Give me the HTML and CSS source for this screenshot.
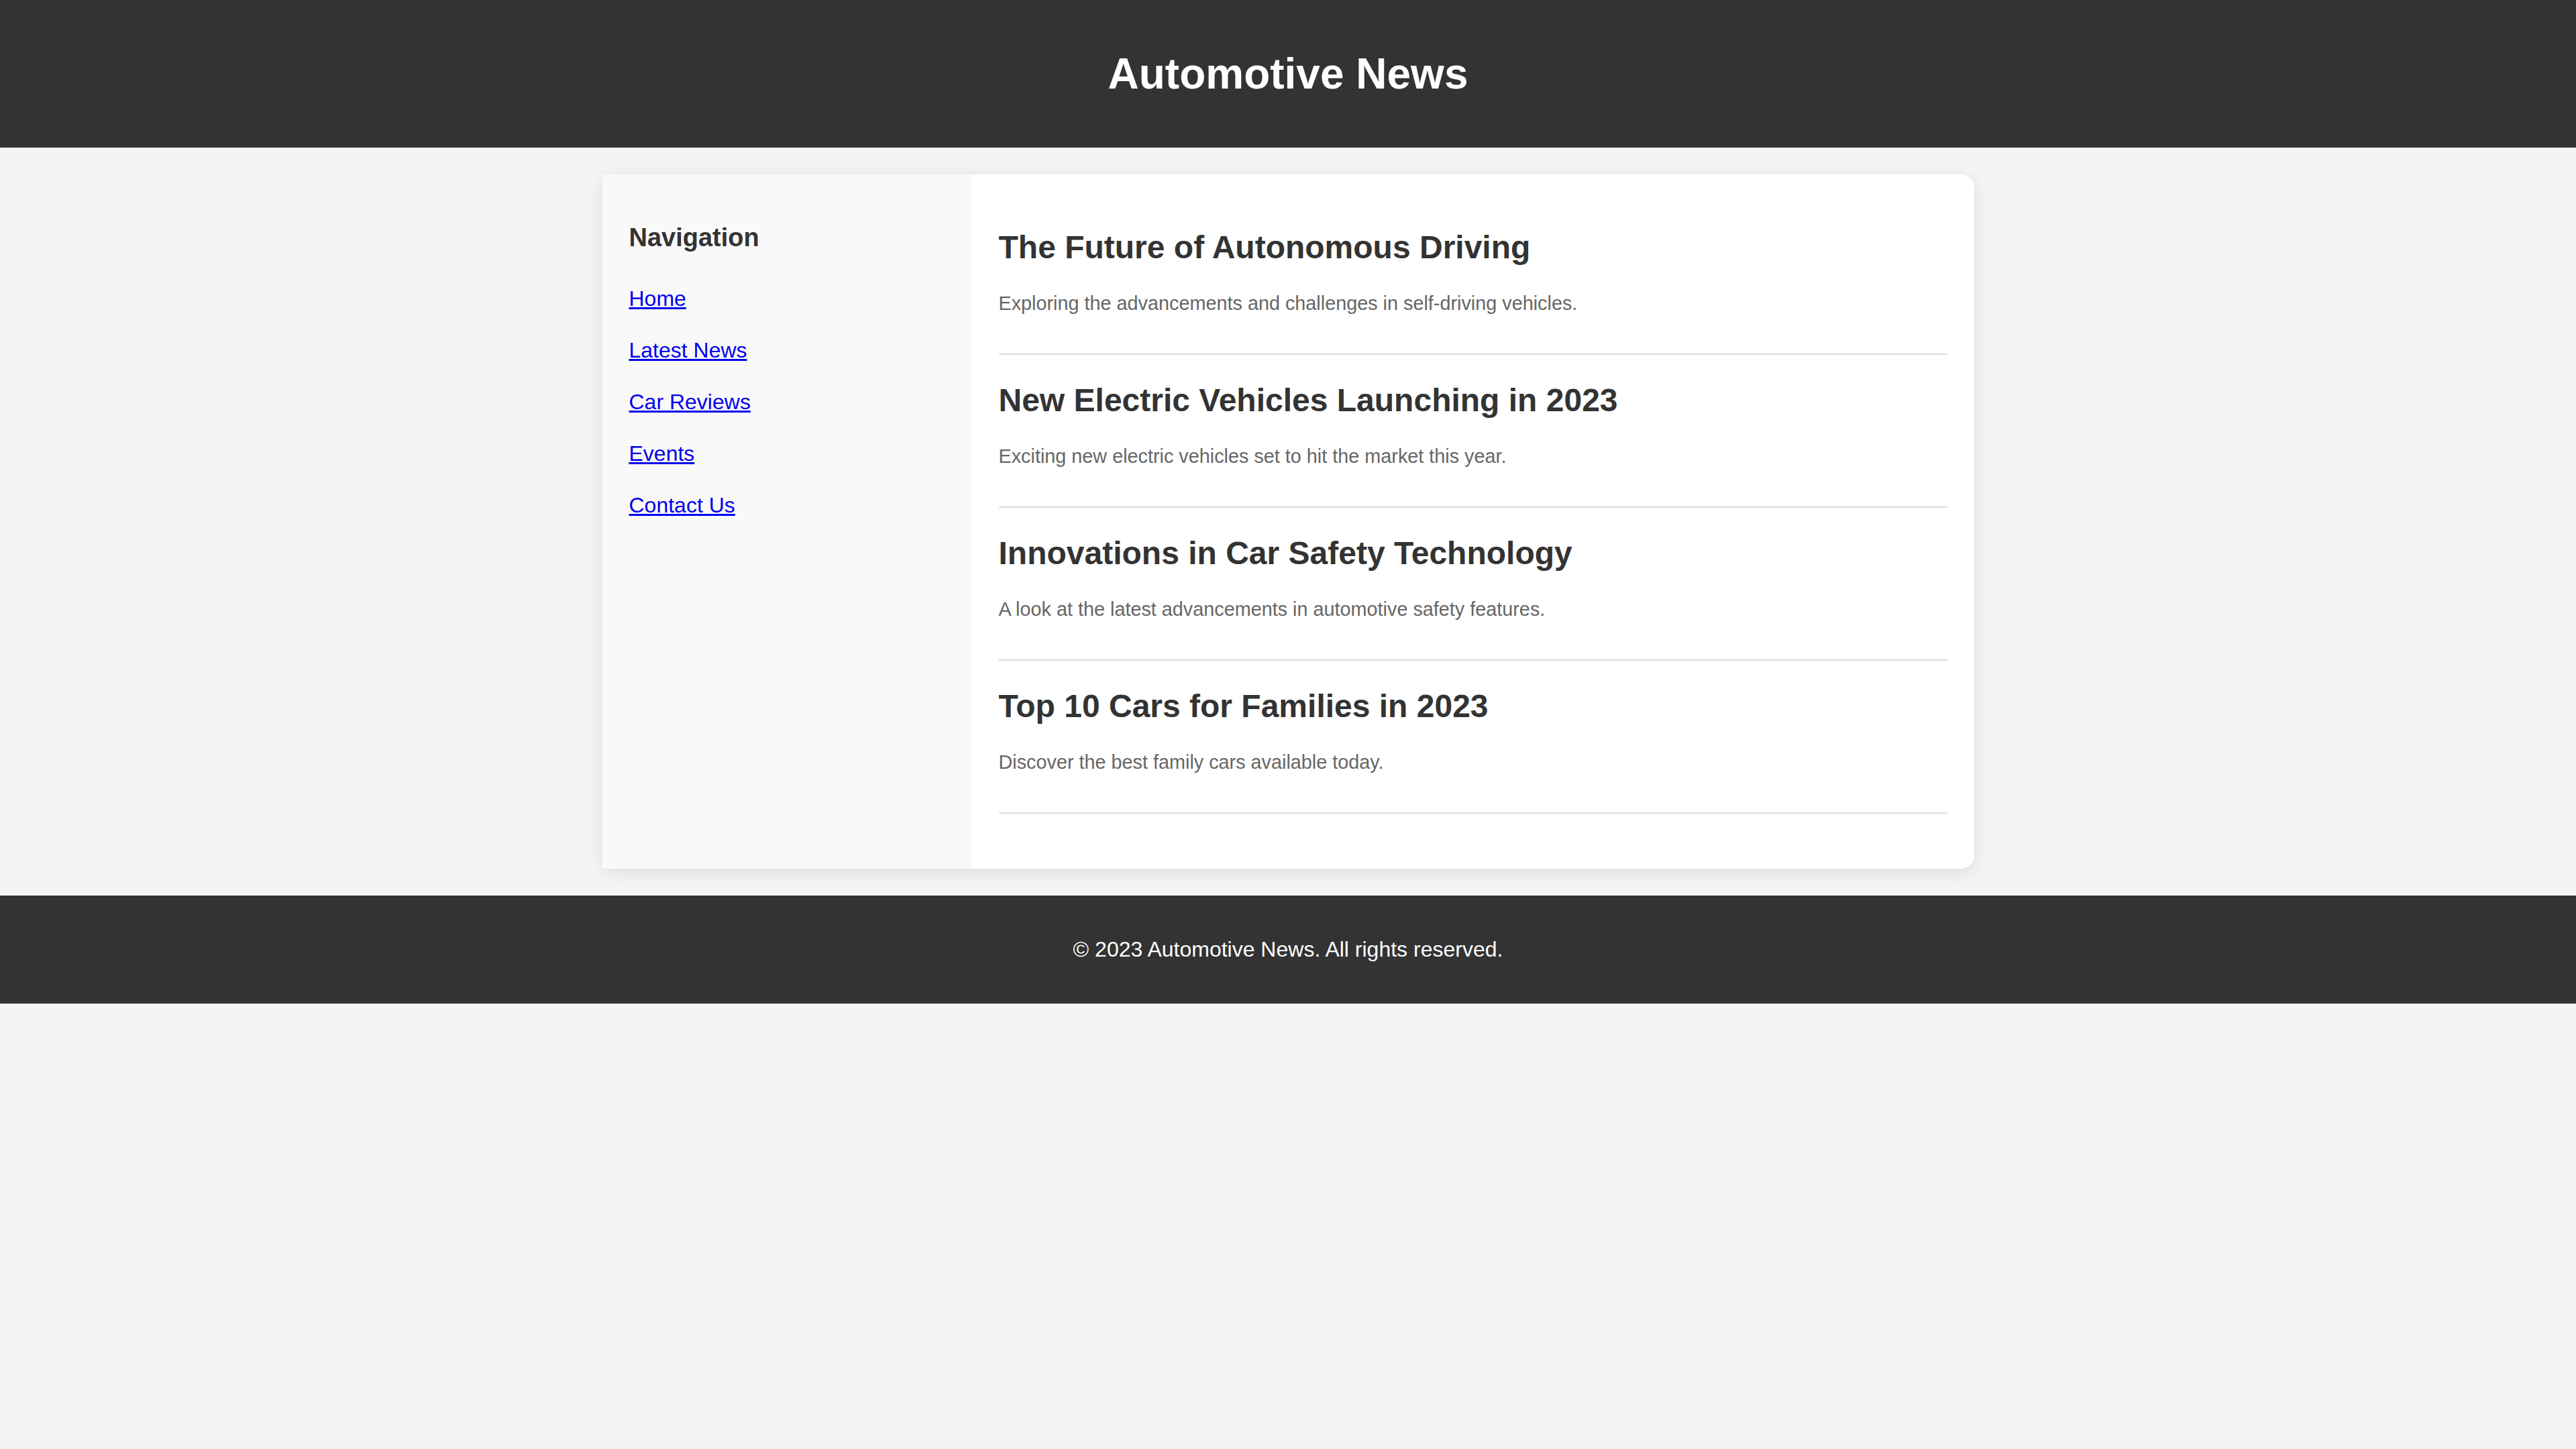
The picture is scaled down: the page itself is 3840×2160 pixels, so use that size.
FILE: index.html
```html
<!DOCTYPE html>
<html lang="en">
<head>
<meta charset="utf-8">
<title>Automotive News</title>
<link rel="stylesheet" href="styles.css">
</head>
<body>
<header class="site-header">
  <h1 class="site-title">Automotive News</h1>
</header>
<main class="page">
  <div class="card">
    <aside class="sidebar">
      <h2 class="nav-title">Navigation</h2>
      <ul class="nav-list">
        <li><a href="#">Home</a></li>
        <li><a href="#">Latest News</a></li>
        <li><a href="#">Car Reviews</a></li>
        <li><a href="#">Events</a></li>
        <li><a href="#">Contact Us</a></li>
      </ul>
    </aside>
    <section class="content">
      <article class="post">
        <h2 class="post-title">The Future of Autonomous Driving</h2>
        <p class="post-text">Exploring the advancements and challenges in self-driving vehicles.</p>
      </article>
      <article class="post">
        <h2 class="post-title">New Electric Vehicles Launching in 2023</h2>
        <p class="post-text">Exciting new electric vehicles set to hit the market this year.</p>
      </article>
      <article class="post">
        <h2 class="post-title">Innovations in Car Safety Technology</h2>
        <p class="post-text">A look at the latest advancements in automotive safety features.</p>
      </article>
      <article class="post">
        <h2 class="post-title">Top 10 Cars for Families in 2023</h2>
        <p class="post-text">Discover the best family cars available today.</p>
      </article>
    </section>
  </div>
</main>
<footer class="site-footer">
  <p class="footer-text">&copy; 2023 Automotive News. All rights reserved.</p>
</footer>
</body>
</html>
```
FILE: styles.css
```css
* {
  box-sizing: border-box;
}

html, body {
  margin: 0;
  padding: 0;
}

body {
  background: #f4f4f4;
  font-family: "Liberation Sans", Arial, Helvetica, sans-serif;
  color: #333;
}

.site-header {
  background: #333;
  height: 220px;
  display: flex;
  align-items: center;
  justify-content: center;
}

.site-title {
  margin: 0;
  color: #fff;
  font-size: 64px;
  font-weight: bold;
  line-height: 74px;
}

.page {
  padding: 40px 0;
}

.card {
  width: 2045px;
  margin: 0 auto;
  display: flex;
  background: #fff;
  border-radius: 20px;
  box-shadow: 0 5px 25px rgba(0, 0, 0, 0.1);
}

.sidebar {
  width: 551px;
  flex: 0 0 551px;
  padding: 40px;
  background: #f9f9f9;
}

.nav-title {
  margin: 32px 0 51px;
  font-size: 38px;
  line-height: 44px;
  font-weight: bold;
  color: #333;
}

.nav-list {
  list-style: none;
  margin: 0;
  padding: 0;
  font-size: 32px;
  line-height: 37px;
}

.nav-list li + li {
  margin-top: 40px;
}

.nav-list a {
  color: #0000ee;
  text-decoration: underline;
}

.content {
  flex: 1;
  padding: 81px 40px 42px;
}

.post {
  padding-bottom: 58px;
  margin-bottom: 40px;
  border-bottom: 2px solid #ddd;
}

.post-title {
  margin: 0 0 40px;
  font-size: 48px;
  line-height: 55px;
  font-weight: bold;
  color: #333;
}

.post-text {
  margin: 0;
  font-size: 28.8px;
  line-height: 33px;
  color: #666;
}

.site-footer {
  background: #333;
  height: 161px;
  display: flex;
  align-items: center;
  justify-content: center;
}

.footer-text {
  margin: 0;
  color: #fff;
  font-size: 32px;
  line-height: 37px;
}
```
